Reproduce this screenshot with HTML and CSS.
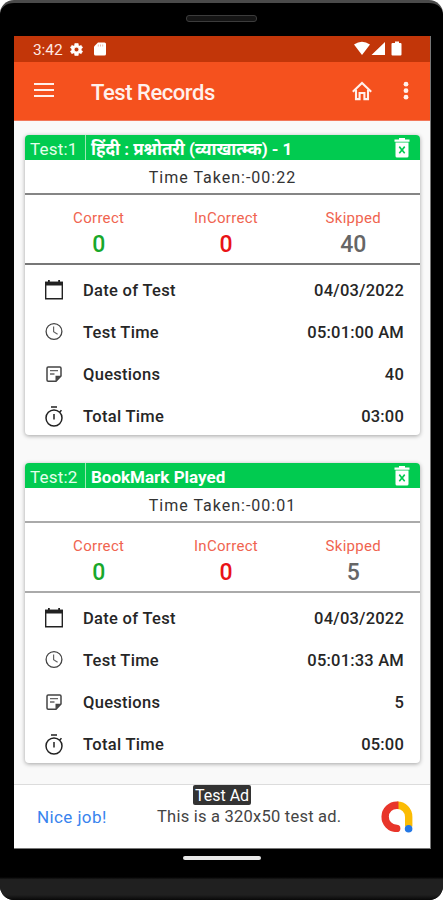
FILE: index.html
```
<!DOCTYPE html>
<html lang="en">
<head>
<meta charset="utf-8">
<title>Test Records</title>
<link rel="stylesheet" href="styles.css">
</head>
<body>
<svg class="defs" width="0" height="0">
  <symbol id="trash" viewBox="0 0 16 20"><path fill="currentColor" fill-rule="evenodd" d="M5 0h6v1.500h4.500v2.200H.5V1.500H5zM1.500 4.600h13V18q0 1.500-1.500 1.500H3q-1.500 0-1.500-1.500zm3.200 4.600L6.900 12l-2.200 2.700 1.200 1.100L8 13.200l2.100 2.600 1.200-1.100L9.100 12l2.200-2.800-1.200-1.100L8 10.700 5.900 8.100z"/></symbol>
  <symbol id="calendar" viewBox="0 0 20 22"><path d="M1.700 3.500h16.600v16.300H1.700z" fill="none" stroke="#222" stroke-width="1.400"/><path d="M1 2.800h18v3.600H1zM4 1h1.800v3H4zm10.200 0H16v3h-1.800z" fill="#222"/></symbol>
  <symbol id="clock" viewBox="0 0 20 22"><circle cx="10" cy="10.500" r="7.900" fill="none" stroke="#444" stroke-width="1.300"/><path d="M9.600 5.500v5.200l4 2.600" fill="none" stroke="#666" stroke-width="1.200"/></symbol>
  <symbol id="note" viewBox="0 0 20 22"><path d="M4.200 4h11.600q1.200 0 1.200 1.200V13l-5 5.200H4.200Q3 18.200 3 17V5.200Q3 4 4.200 4z" fill="none" stroke="#444" stroke-width="1.500"/><path d="M11.500 18v-5.300H17z" fill="#444"/><path d="M6 7.700h8M6 11h4.500" stroke="#666" stroke-width="1.300"/></symbol>
  <symbol id="timer" viewBox="0 0 20 22"><circle cx="10" cy="12" r="8" fill="none" stroke="#222" stroke-width="1.500"/><path d="M7 1h6M10 8v5.500M15.700 6l1.800-1.800" fill="none" stroke="#222" stroke-width="1.500"/></symbol>
</svg>
<div class="phone">
  <div class="top-bezel"><div class="speaker"></div></div>
  <div class="screen">
    <div class="status">
      <span class="time">3:42</span>
      <svg class="gear" viewBox="0 0 24 24"><path fill="currentColor" stroke="currentColor" d="M19.400 13c.1-.3.1-.6.1-1s0-.7-.1-1l2.300-1.800-2.200-3.800-2.700 1.100c-.6-.4-1.100-.8-1.700-1L14.700 2.500H9.300l-.4 3c-.6.200-1.200.6-1.700 1L4.500 5.400 2.300 9.200 4.600 11a8 8 0 0 0 0 2l-2.300 1.800 2.200 3.800 2.700-1.100c.5.400 1.100.8 1.700 1l.4 3h5.400l.4-3c.6-.2 1.200-.6 1.700-1l2.700 1.100 2.200-3.800zM12 15.700a3.700 3.700 0 1 1 0-7.400 3.700 3.700 0 0 1 0 7.400z"/></svg>
      <svg class="sd" viewBox="0 0 12 14"><path fill="currentColor" d="M4 .5h6.500q1.500 0 1.500 1.500v10q0 1.500-1.500 1.500h-9Q0 13.500 0 12V4.500z"/><path d="M4.300 2.500v2M6.500 2.500v2M8.700 2.500v2" stroke="#e8a48f" stroke-width=".8"/></svg>
      <svg class="signals" viewBox="0 0 48 16"><path fill="currentColor" d="M0 3.500Q8-2 16 3.500L8 14zM17.500 14 31 1v13zM38.500 2H41V.5h4V2h1.500q1 0 1 1v10.500q0 1-1 1h-8q-1 0-1-1V3q0-1 1-1z"/></svg>
    </div>
    <header class="appbar">
      <svg class="menu" viewBox="0 0 20 16"><path d="M0 2h20M0 8h20M0 14h20" stroke="currentColor" stroke-width="2"/></svg>
      <h1>Test Records</h1>
      <svg class="home" viewBox="0 0 20 20"><path d="M.8 10.800 10 2l9.200 8.800M4 8.700v9.400h3.600V12h4.800v6.100H16V8.700" fill="none" stroke="currentColor" stroke-width="2.100"/></svg>
      <svg class="more" viewBox="0 0 6 20"><g fill="currentColor"><circle cx="3" cy="3.200" r="2.400"/><circle cx="3" cy="9.700" r="2.400"/><circle cx="3" cy="16.200" r="2.400"/></g></svg>
    </header>
    <main>
      <section class="card">
        <div class="card-head"><span class="num">Test:1</span><span class="name hindi">हिंदी : प्रश्नोतरी (व्याखात्म्क) - 1</span><svg class="trash"><use href="#trash"/></svg></div>
        <div class="taken">Time Taken:-00:22</div>
        <div class="stats">
          <div><span>Correct</span><b class="good">0</b></div>
          <div><span>InCorrect</span><b class="bad">0</b></div>
          <div><span>Skipped</span><b>40</b></div>
        </div>
        <div class="rows">
          <div class="row"><svg><use href="#calendar"/></svg><span>Date of Test</span><em>04/03/2022</em></div>
          <div class="row"><svg><use href="#clock"/></svg><span>Test Time</span><em>05:01:00 AM</em></div>
          <div class="row"><svg><use href="#note"/></svg><span>Questions</span><em>40</em></div>
          <div class="row"><svg><use href="#timer"/></svg><span>Total Time</span><em>03:00</em></div>
        </div>
      </section>
      <section class="card soft">
        <div class="card-head"><span class="num">Test:2</span><span class="name">BookMark Played</span><svg class="trash"><use href="#trash"/></svg></div>
        <div class="taken">Time Taken:-00:01</div>
        <div class="stats">
          <div><span>Correct</span><b class="good">0</b></div>
          <div><span>InCorrect</span><b class="bad">0</b></div>
          <div><span>Skipped</span><b>5</b></div>
        </div>
        <div class="rows">
          <div class="row"><svg><use href="#calendar"/></svg><span>Date of Test</span><em>04/03/2022</em></div>
          <div class="row"><svg><use href="#clock"/></svg><span>Test Time</span><em>05:01:33 AM</em></div>
          <div class="row"><svg><use href="#note"/></svg><span>Questions</span><em>5</em></div>
          <div class="row"><svg><use href="#timer"/></svg><span>Total Time</span><em>05:00</em></div>
        </div>
      </section>
    </main>
    <footer class="ad">
      <span class="nice">Nice job!</span>
      <span class="msg">This is a 320x50 test ad.</span>
      <svg class="admob" viewBox="0 0 32 32"><g fill="none" stroke-width="7.400"><path d="M16 4.200A11.500 11.500 0 0 1 27.700 16v9.500" stroke="#fbbc04"/><path d="M17.500 4.200H16a11.600 11.600 0 0 0-.5 23.200" stroke="#e8352a"/></g><circle cx="15.700" cy="27.400" r="3.700" fill="#e8352a"/><circle cx="27.600" cy="27.700" r="3.800" fill="#2478e5"/></svg>
      <span class="tag">Test Ad</span>
    </footer>
  </div>
  <div class="bottom-bezel"><div class="pill"></div></div>
</div>
</body>
</html>
```
FILE: styles.css
```
* { box-sizing: border-box; }
body { margin: 0; background: #fff; font-family: Roboto, "Noto Sans", "Liberation Sans", sans-serif; color: #222; }
.defs { position: absolute; }
.phone { width: 443px; height: 900px; background: #000; border-radius: 14px; border-top: 3px solid #4a4a4a; overflow: hidden; display: flex; flex-direction: column; }
.top-bezel { height: 33px; flex: none; padding-top: 12px; }
.speaker { width: 71px; height: 7px; margin-left: 186px; border: 1px solid #3c3c3c; border-radius: 3px; background: #151515; }
.screen { width: 417px; height: 813px; margin-left: 14px; flex: none; background: #f9f9f9; border: solid #777; border-width: 0 1px 1px 0; display: flex; flex-direction: column; }
.status { height: 26px; background: #c23609; color: #fff; display: flex; align-items: center; padding: 0 28px 0 19px; flex: none; }
.time { font-size: 15.500px; width: 36px; margin-top: 1px; color: #ffe9e2; letter-spacing: -.1px; }
.gear { width: 15px; height: 15px; margin-right: 10px; }
.sd { width: 12px; height: 14px; }
.signals { width: 48px; height: 16px; margin-left: auto; }
.appbar { height: 59px; background: #f5511e; border-bottom: 1px solid #f2785a; color: #fff0ec; display: flex; align-items: center; padding: 0 21px 0 20px; flex: none; }
.menu { width: 20px; height: 16px; margin-top: -2px; }
.appbar h1 { margin: 2px 0 0 37px; font-size: 22px; font-weight: 500; flex: 1; letter-spacing: -.45px; }
.home { width: 20px; height: 20px; margin-right: 31px; }
.more { width: 6px; height: 20px; }
main { flex: 1; padding: 14px 10px 0 11px; display: flex; flex-direction: column; gap: 28px; }
.card { height: 300px; background: #fff; border-radius: 4px; overflow: hidden; box-shadow: 0 1px 4px rgba(0,0,0,.35); flex: none; }
.card-head { height: 25px; background: #01cb50; color: #fff; display: flex; align-items: center; padding: 0 10px 0 5px; }
.num { width: 56px; height: 25px; line-height: 28px; font-size: 17px; color: #e4ffec; border-right: 1px solid #9ce8b5; letter-spacing: .2px; }
.name { flex: 1; margin-left: 5px; font-size: 17px; font-weight: 700; line-height: 28px; height: 25px; white-space: nowrap; }
.hindi { letter-spacing: -.05px; }
.trash { width: 16px; height: 20px; }
.taken { height: 35px; border-bottom: 2px solid #858585; text-align: center; line-height: 36px; font-size: 16px; letter-spacing: 1px; color: #333; }
.stats { height: 70px; border-bottom: 2px solid #777; display: grid; grid-template-columns: 1fr 1fr 1fr; padding: 12px 3px 0 10px; text-align: center; }
.stats span { display: block; font-size: 15px; line-height: 22px; color: #f06450; letter-spacing: .3px; }
.stats b { display: block; font-size: 23px; line-height: 31px; font-weight: 500; color: #666; }
.stats .good { color: #18a82b; }
.stats .bad { color: #e91217; }
.soft .taken, .soft .stats { border-color: #aaa; }
.rows { padding: 4px 16px 0 19px; }
.row { height: 42.200px; display: flex; align-items: center; font-size: 16.500px; font-weight: 500; color: #262626; letter-spacing: .3px; }
.row svg { width: 20px; height: 22px; }
.row span { margin-left: 19px; flex: 1; }
.row em { font-style: normal; letter-spacing: .2px; }
.ad { height: 64px; border-top: 1px solid #dcdcdc; background: #fff; display: flex; align-items: center; padding: 0 17px 0 23px; position: relative; flex: none; }
.nice { width: 120px; color: #3983ee; font-size: 17px; letter-spacing: .4px; }
.msg { flex: 1; color: #444; font-size: 16.500px; letter-spacing: .23px; white-space: nowrap; }
.admob { width: 32px; height: 32px; }
.tag { position: absolute; left: 179px; top: 0; width: 58px; height: 20px; border-radius: 2px; background: #333; color: #fff; font-size: 16px; line-height: 21px; text-align: center; white-space: nowrap; }
.bottom-bezel { flex: 1; padding-top: 7px; background: linear-gradient(#000 0 55%, #202020 60% 90%, #080808); }
.pill { width: 78px; height: 4px; margin-left: 183px; border-radius: 2px; background: #e8e8e8; }
```
